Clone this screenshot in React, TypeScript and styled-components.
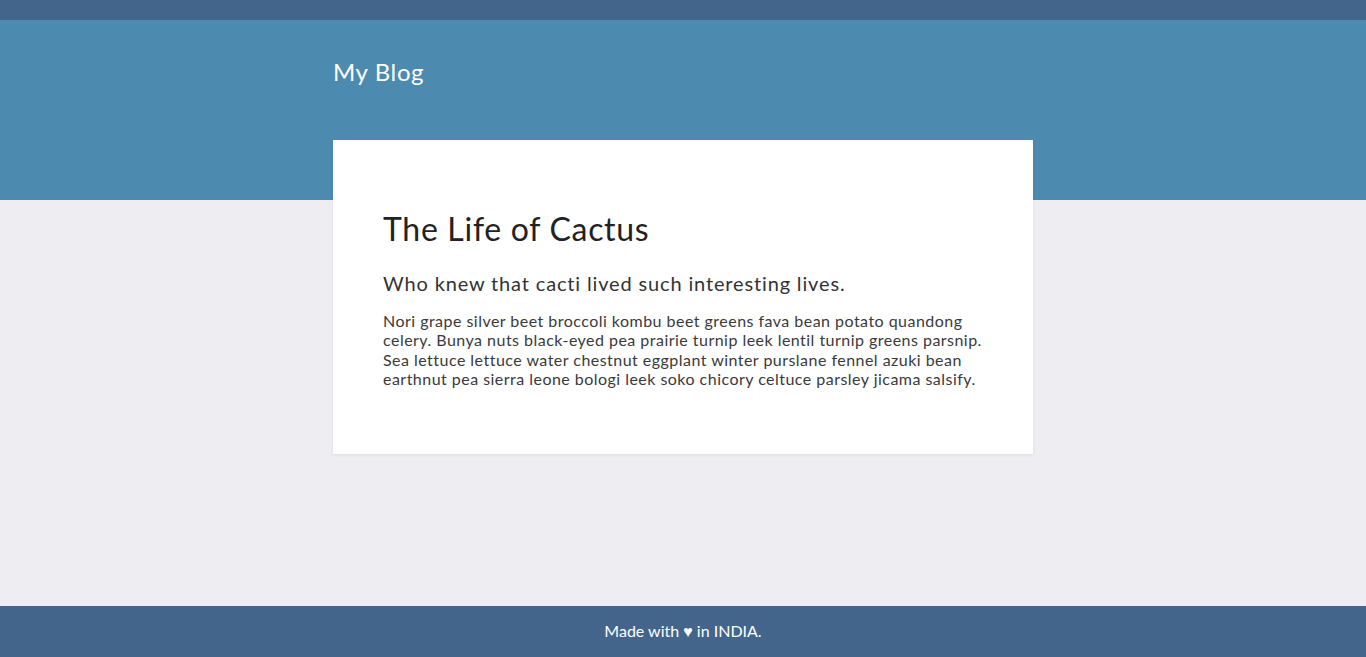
import React from "react";
import styled, { createGlobalStyle } from "styled-components";

const Global = createGlobalStyle`
  html, body { margin: 0; padding: 0; }
  body {
    background: #eeeef2;
    font-family: "Lato", "Open Sans", sans-serif;
    color: #333;
  }
  * { box-sizing: border-box; }
`;

const Page = styled.div`
  min-height: 100vh;
  display: flex;
  flex-direction: column;
`;

const TopBar = styled.div`
  height: 20px;
  background: #43658b;
`;

const Header = styled.header`
  height: 180px;
  background: #4d8aaf;
  padding-top: 38px;
`;

const Container = styled.div`
  width: 700px;
  margin: 0 auto;
`;

const SiteTitle = styled.div`
  font-size: 24px;
  line-height: 28.8px;
  color: #fff;
  letter-spacing: 0.6px;
`;

const Main = styled.main`
  flex: 1;
`;

const Card = styled.article`
  width: 700px;
  margin: -60px auto 0;
  background: #fff;
  padding: 50px;
  box-shadow: 0 1px 3px rgba(0, 0, 0, 0.08);
  position: relative;
`;

const Title = styled.h1`
  font-size: 32px;
  line-height: 38.4px;
  font-weight: 400;
  margin: 20.4px 0 22.4px;
  color: #222;
  letter-spacing: 0.7px;
`;

const Subtitle = styled.h2`
  font-size: 20px;
  line-height: 24px;
  font-weight: 400;
  margin: 0;
  color: #333;
  letter-spacing: 0.85px;
`;

const Body = styled.p`
  font-size: 16px;
  line-height: 19.2px;
  margin: 16px 0;
  color: #3a3a3a;
  letter-spacing: 0.47px;
`;

const Footer = styled.footer`
  height: 51px;
  background: #43658b;
  color: #fff;
  display: flex;
  align-items: center;
  justify-content: center;
  font-size: 16px;
  padding-bottom: 1px;
`;

export default function App() {
  return (
    <>
      <Global />
      <Page>
        <TopBar />
        <Header>
          <Container>
            <SiteTitle>My Blog</SiteTitle>
          </Container>
        </Header>
        <Main>
          <Card>
            <Title>The Life of Cactus</Title>
            <Subtitle>Who knew that cacti lived such interesting lives.</Subtitle>
            <Body>
              Nori grape silver beet broccoli kombu beet greens fava bean potato quandong
              celery. Bunya nuts black-eyed pea prairie turnip leek lentil turnip greens
              parsnip. Sea lettuce lettuce water chestnut eggplant winter purslane fennel
              azuki bean earthnut pea sierra leone bologi leek soko chicory celtuce parsley
              jicama salsify.
            </Body>
          </Card>
        </Main>
        <Footer>Made with ♥ in INDIA.</Footer>
      </Page>
    </>
  );
}
